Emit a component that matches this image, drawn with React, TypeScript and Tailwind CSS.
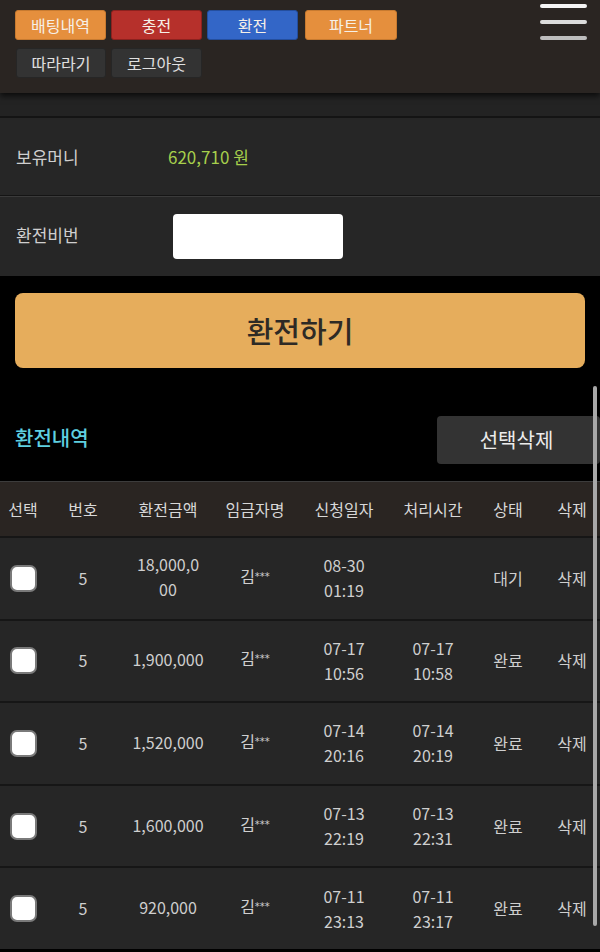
import React from "react";

const font = { fontFamily: '"Noto Sans CJK KR", "Noto Sans", sans-serif' };

type Row = { amount: React.ReactNode; req: [string, string]; done?: [string, string]; status: string };

const rows: Row[] = [
  { amount: (<>18,000,0<br />00</>), req: ["08-30", "01:19"], status: "대기" },
  { amount: "1,900,000", req: ["07-17", "10:56"], done: ["07-17", "10:58"], status: "완료" },
  { amount: "1,520,000", req: ["07-14", "20:16"], done: ["07-14", "20:19"], status: "완료" },
  { amount: "1,600,000", req: ["07-13", "22:19"], done: ["07-13", "22:31"], status: "완료" },
  { amount: "920,000", req: ["07-11", "23:13"], done: ["07-11", "23:17"], status: "완료" },
];

const cols = "grid grid-cols-[46px_74px_96px_78px_100px_78px_72px_56px]";

export default function App() {
  return (
    <div className="relative w-[600px] h-[952px] overflow-hidden bg-black text-[#d0d0d0]" style={font}>
      {/* header */}
      <div className="relative z-10 h-[93px] bg-[#2a2522] shadow-[0_3px_6px_rgba(0,0,0,0.7)] flex justify-between">
        <div className="pl-[15px] pt-[10px] flex flex-col gap-[8px]">
          <div className="flex gap-[5px]">
            <button className="w-[91px] h-[30px] rounded-[3px] bg-[#e58f3d] border border-[#c77a30] text-[16px] text-[#f6f0e8]">배팅내역</button>
            <button className="w-[91px] h-[30px] rounded-[3px] bg-[#b6302b] border border-[#8c211e] text-[16px] text-[#f6f0e8]">충전</button>
            <button className="w-[91px] h-[30px] rounded-[3px] bg-[#3366c7] border border-[#244e9e] text-[16px] text-[#f6f0e8]">환전</button>
            <button className="ml-[2px] w-[92px] h-[30px] rounded-[3px] bg-[#e58f3d] border border-[#c77a30] text-[16px] text-[#f6f0e8]">파트너</button>
          </div>
          <div className="flex gap-[5px] pl-[1px]">
            <button className="w-[90px] h-[30px] rounded-[3px] bg-[#333333] border border-[#262626] text-[16px] text-[#e0e0e0]">따라라기</button>
            <button className="w-[91px] h-[30px] rounded-[3px] bg-[#333333] border border-[#262626] text-[16px] text-[#e0e0e0]">로그아웃</button>
          </div>
        </div>
        <div className="pr-[13px] pt-[4px] flex flex-col gap-[12px]">
          <div className="w-[47px] h-[4px] rounded-full bg-[#f4f4f4]" />
          <div className="w-[47px] h-[4px] rounded-full bg-[#dcdcdc]" />
          <div className="w-[47px] h-[4px] rounded-full bg-[#bdbdbd]" />
        </div>
      </div>
      <div className="h-[25px] bg-[#232323] border-b-2 border-[#141414]" />

      {/* info rows */}
      <div className="h-[78px] bg-[#262626] border-b border-[#141414] flex items-center px-[16px]">
        <div className="w-[152px] text-[17px] text-[#cfcfcf]">보유머니</div>
        <div className="text-[17px] text-[#a6cf4c]">620,710 원</div>
      </div>
      <div className="h-[80px] bg-[#262626] border-t border-[#3a3a3a] flex items-center px-[16px]">
        <div className="w-[157px] text-[17px] text-[#cfcfcf] -mt-[4px]">환전비번</div>
        <div className="w-[170px] h-[45px] rounded-[4px] bg-white -mt-[1px]" />
      </div>

      {/* main button */}
      <div className="px-[15px] pt-[17px]">
        <button className="w-full h-[75px] rounded-[8px] bg-[#e6ad5c] text-[29px] font-medium text-[#2e2a25]">환전하기</button>
      </div>

      {/* title */}
      <div className="mt-[48px] h-[48px] flex items-center justify-between pl-[15px]">
        <div className="text-[20px] font-medium text-[#5fd0e0] -mt-[4px]">환전내역</div>
        <button className="w-[163px] h-[48px] rounded-[4px] bg-[#333333] text-[20px] text-[#ececec] pr-[4px]">선택삭제</button>
      </div>

      {/* table */}
      <div className="mt-[17px]">
        <div className={`${cols} h-[55px] bg-[#2a2522] border-t border-[#3c3c3c] items-center text-center text-[16px] text-[#d8d8d8]`}>
          <div>선택</div>
          <div>번호</div>
          <div>환전금액</div>
          <div>임금자명</div>
          <div>신청일자</div>
          <div>처리시간</div>
          <div>상태</div>
          <div>삭제</div>
        </div>
        {rows.map((r, i) => (
          <div key={i} className={`${cols} h-[82.6px] bg-[#262626] border-t-2 border-[#161616] items-center text-center text-[16px] leading-[25px] text-[#cfcfcf]`}>
            <div className="flex justify-center">
              <div className="w-[27px] h-[27px] rounded-[7px] bg-white border-2 border-[#7a7a7a]" />
            </div>
            <div>5</div>
            <div className="-mt-[2px]">{r.amount}</div>
            <div className="-mt-[4px]">김<span className="text-[10px] align-top" style={{ fontFamily: '"DejaVu Sans", sans-serif' }}>***</span></div>
            <div>{r.req[0]}<br />{r.req[1]}</div>
            <div>{r.done ? (<>{r.done[0]}<br />{r.done[1]}</>) : null}</div>
            <div>{r.status}</div>
            <div>삭제</div>
          </div>
        ))}
      </div>

      {/* scrollbar overlay */}
      <div className="absolute left-[593px] top-[386px] w-[4px] h-[540px] rounded-full bg-[#a8a8a8]" />
    </div>
  );
}
